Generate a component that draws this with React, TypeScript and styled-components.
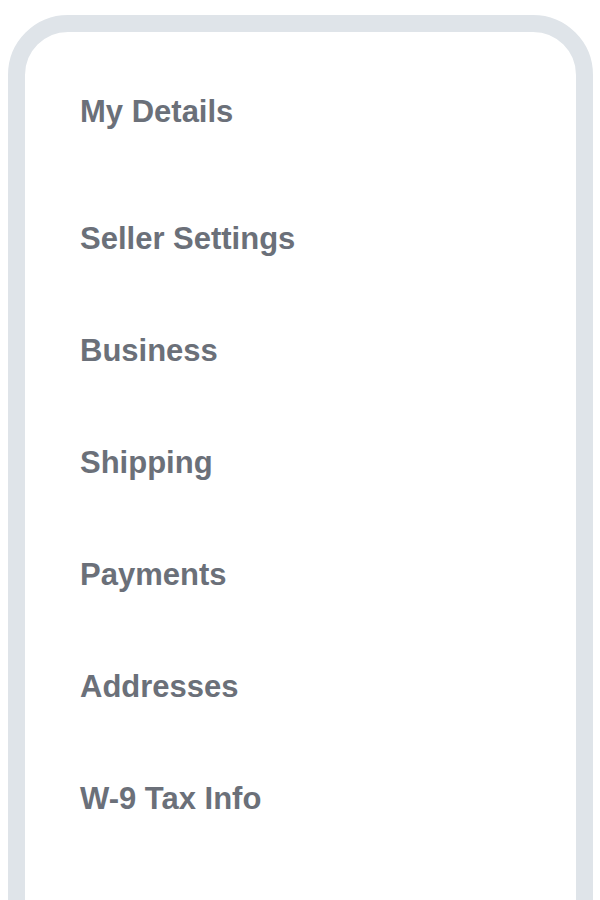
import * as React from 'react';
import styled, { createGlobalStyle } from 'styled-components';

const sections: string[] = [
  'Seller Settings',
  'Business',
  'Shipping',
  'Payments',
  'Addresses',
  'W-9 Tax Info',
];

export default function App() {
  return (
    <React.Fragment>
      <GlobalStyle />
      <Card>
        <Title>My Details</Title>
        <NavList>
          {sections.map((label) => (
            <NavItem key={label}>{label}</NavItem>
          ))}
        </NavList>
      </Card>
    </React.Fragment>
  );
}

const GlobalStyle = createGlobalStyle`
  html, body {
    margin: 0;
    background: #ffffff;
    overflow: hidden;
  }
  body {
    padding: 15px 7px 0 8px;
    font-family: "Liberation Sans", Arial, sans-serif;
  }
`;

const Card = styled.div`
  border: 17px solid #dfe4e9;
  border-radius: 60px;
  background: #ffffff;
  padding: 62px 40px 140px 55px;
`;

const Title = styled.div`
  font-size: 31px;
  font-weight: bold;
  color: #6b7079;
  margin-bottom: 91px;
`;

const NavList = styled.div`
  display: flex;
  flex-direction: column;
  gap: 76px;
`;

const NavItem = styled.div`
  font-size: 31px;
  font-weight: bold;
  color: #6b7079;
`;
